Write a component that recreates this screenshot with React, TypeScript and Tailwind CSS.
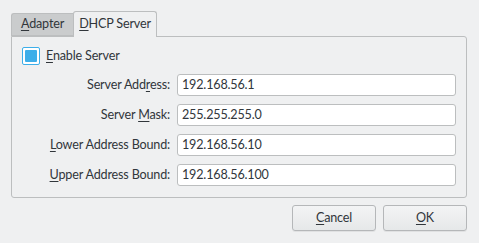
import React from "react";

const U = ({ children }: { children: React.ReactNode }) => (
  <span className="underline underline-offset-2 decoration-1">{children}</span>
);

const rows: { label: React.ReactNode; value: string }[] = [
  { label: <>Server Add<U>r</U>ess:</>, value: "192.168.56.1" },
  { label: <>Server <U>M</U>ask:</>, value: "255.255.255.0" },
  { label: <><U>L</U>ower Address Bound:</>, value: "192.168.56.10" },
  { label: <><U>U</U>pper Address Bound:</>, value: "192.168.56.100" },
];

export default function App() {
  return (
    <div
      className="w-[479px] h-[243px] bg-[#eff0f1] text-[#31363b] text-[12.6px] tracking-[-0.18px] pt-[11px] pl-[11px] pr-[12px]"
      style={{ fontFamily: 'Lato, "Noto Sans", sans-serif' }}
    >
      <div className="flex items-end h-[26px] relative z-10">
        <div className="w-[62px] h-[23px] mb-[1px] flex items-center justify-center bg-[#cacccd] border border-[#bcbebf] border-r-0 rounded-tl-[3px] leading-none">
          <span><U>A</U>dapter</span>
        </div>
        <div className="w-[84px] h-[26px] flex items-center justify-center bg-[#eff0f1] border border-[#bcbebf] border-b-0 rounded-t-[3px] leading-none">
          <span><U>D</U>HCP Server</span>
        </div>
      </div>
      <div className="-mt-[1px] h-[162px] border border-[#bcbebf] rounded-b-[3px] rounded-tr-[3px] pl-[10px] pr-[10px] pt-[10px]">
        <div className="flex items-center gap-[6px] h-[18px]">
          <div className="w-[18px] h-[18px] border border-[#3daee9] rounded-[2px] bg-white p-[2px]">
            <div className="w-full h-full bg-[#3daee9] rounded-[1px]" />
          </div>
          <span className="leading-none"><U>E</U>nable Server</span>
        </div>
        <div className="mt-[9px] flex flex-col gap-[8px]">
          {rows.map((r, i) => (
            <div key={i} className="flex items-center h-[22px]">
              <div className="w-[155px] text-right pr-[7px] leading-none whitespace-nowrap">{r.label}</div>
              <div className="flex-1 h-[22px] bg-white border border-[#bcbebf] rounded-[3px] px-[4px] flex items-center leading-none">
                {r.value}
              </div>
            </div>
          ))}
        </div>
      </div>
      <div className="flex justify-end gap-[7px] mt-[7px]">
        <button className="w-[84px] h-[26px] border border-[#b5b7b9] rounded-[3px] bg-gradient-to-b from-[#f3f4f5] to-[#e6e8e9] leading-none shadow-[0_1px_0_rgba(0,0,0,0.06)]">
          <U>C</U>ancel
        </button>
        <button className="w-[84px] h-[26px] border border-[#b5b7b9] rounded-[3px] bg-gradient-to-b from-[#f3f4f5] to-[#e6e8e9] leading-none shadow-[0_1px_0_rgba(0,0,0,0.06)]">
          <U>O</U>K
        </button>
      </div>
    </div>
  );
}
